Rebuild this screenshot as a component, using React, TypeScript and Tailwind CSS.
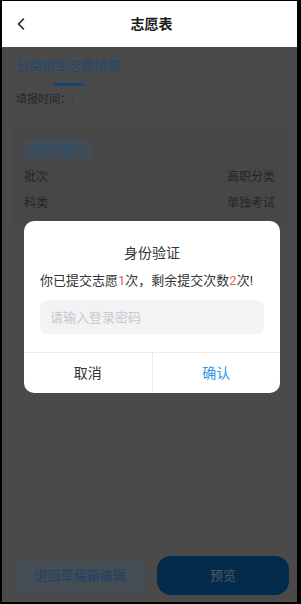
import React from "react";

const rows = [
  { label: "批次", value: "高职分类" },
  { label: "科类", value: "单独考试" },
];

export default function App() {
  return (
    <div className="h-[604px] w-[301px] bg-black pb-[2px] pl-[2px] pr-[4px] pt-[1px] font-['Roboto','Noto_Sans_CJK_SC',sans-serif]">
      <div className="relative flex h-full flex-col bg-[#4a4a4a]">
        {/* header */}
        <header className="relative flex h-[46px] shrink-0 items-center justify-center bg-white">
          <svg
            className="absolute left-[15px] top-[17px]"
            width="8"
            height="12"
            viewBox="0 0 8 12"
            fill="none"
          >
            <path
              d="M6.5 1 L1.5 6 L6.5 11"
              stroke="#222"
              strokeWidth="1.6"
              strokeLinecap="round"
              strokeLinejoin="round"
            />
          </svg>
          <span className="pl-[4px] text-[14px] font-bold text-[#1a1a1a]">
            志愿表
          </span>
        </header>

        {/* page (dimmed by the dialog) */}
        <div className="flex flex-1 flex-col">
          <div className="flex flex-col items-start px-[14px] pt-[9px]">
            <div className="flex flex-col items-center">
              <span className="whitespace-nowrap text-[13px] leading-[20px] text-[#1b4a78]">
                分类招生志愿填报
              </span>
              <span className="mt-[7px] h-[3px] w-[31px] bg-[#164474]" />
            </div>
            <p className="mt-[6px] text-[11px] leading-[16px] text-[#262626]">
              填报时间：:
            </p>
          </div>

          <div className="mx-[10px] mt-[19px] rounded-[4px] bg-[#474747] px-[12px] pb-[8px] pt-[9px]">
            <span className="inline-flex h-[20px] items-center rounded-[2px] bg-[#434c55] px-[4px] text-[10px] text-[#24507b]">
              可填/已填1/1
            </span>
            <div className="mt-[4px] flex flex-col">
              {rows.map((r) => (
                <div
                  key={r.label}
                  className="flex h-[26px] items-center justify-between text-[12px] text-[#262626]"
                >
                  <span>{r.label}</span>
                  <span>{r.value}</span>
                </div>
              ))}
            </div>
          </div>

          <div className="mt-auto flex gap-[11px] pb-[7px] pl-[12px] pr-[8px]">
            <button className="flex h-[39px] flex-1 items-center justify-center rounded-[14px] bg-[#454d52] text-[13px] text-[#1d416a]">
              退回草稿箱编辑
            </button>
            <button className="flex h-[39px] flex-1 items-center justify-center rounded-[14px] bg-[#032b4c] text-[13px] text-[#50565c]">
              预览
            </button>
          </div>
        </div>

        {/* dialog */}
        <div className="absolute left-[22px] top-[220px] w-[256px] overflow-hidden rounded-[10px] bg-white">
          <div className="flex flex-col px-[16px] pt-[22px]">
            <h2 className="text-center text-[14px] leading-[20px] text-[#333]">
              身份验证
            </h2>
            <p className="mt-[8px] whitespace-nowrap text-[13px] leading-[20px] text-[#333]">
              你已提交志愿<span className="text-[#f25b5b]">1</span>
              次，剩余提交次数<span className="text-[#f25b5b]">2</span>次!
            </p>
            <input
              type="password"
              placeholder="请输入登录密码"
              className="mt-[9px] h-[34px] w-full rounded-[7px] bg-[#f2f3f5] px-[10px] text-[13px] text-[#333] outline-none placeholder:text-[#c6c8cc]"
            />
          </div>
          <div className="mt-[18px] flex h-[41px] border-t border-[#ececec] text-[14px]">
            <button className="flex flex-1 items-center justify-center border-r border-[#ececec] text-[#333]">
              取消
            </button>
            <button className="flex flex-1 items-center justify-center text-[#2f93e6]">
              确认
            </button>
          </div>
        </div>
      </div>
    </div>
  );
}
